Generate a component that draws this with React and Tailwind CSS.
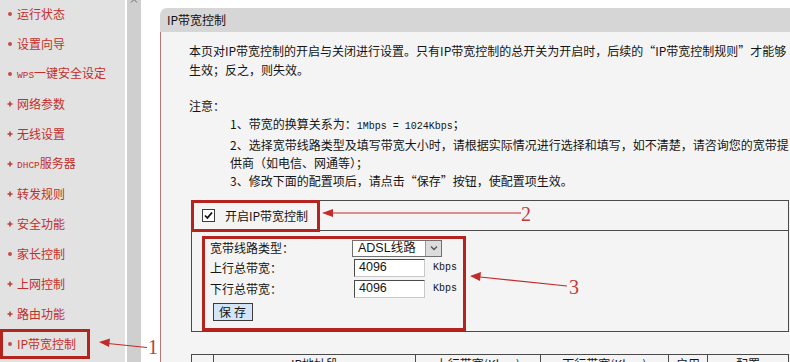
import React from 'react'

const menu = [
  ['运行状态', 'dot'],
  ['设置向导', 'dot'],
  ['WPS|一键安全设定', 'dot'],
  ['网络参数', 'plus'],
  ['无线设置', 'plus'],
  ['DHCP|服务器', 'plus'],
  ['转发规则', 'plus'],
  ['安全功能', 'plus'],
  ['家长控制', 'dot'],
  ['上网控制', 'plus'],
  ['路由功能', 'plus'],
  ['IP带宽控制', 'dot'],
]

function Bullet({ kind }) {
  if (kind === 'plus') {
    return (
      <svg width="6" height="6" viewBox="0 0 6 6" className="ml-[1px]">
        <path d="M3 0.5V5.5M0.5 3H5.5" stroke="#b8403c" strokeWidth="1.6" />
      </svg>
    )
  }
  return <span className="ml-[2px] w-[4px] h-[4px] rounded-full bg-[#c0504c]" />
}

function MenuLabel({ text }) {
  if (text.includes('|')) {
    const [latin, rest] = text.split('|')
    return (
      <span>
        <span className="font-['Liberation_Mono',monospace] text-[9.5px]">{latin}</span>
        {rest}
      </span>
    )
  }
  return <span>{text}</span>
}

function Sidebar() {
  return (
    <div className="w-[125px] shrink-0 bg-[#e2e2e2]">
      <div className="mt-[-1px]">
        {menu.map(([label, kind], i) => {
          const active = i === menu.length - 1
          return (
            <div
              key={label}
              className={
                active
                  ? 'h-[30px] w-[90px] flex items-center pl-[3px] border-[3px] border-[#b3241f] text-[#c22f2b]'
                  : 'h-[30px] flex items-center pl-[6px] text-[#c22f2b]'
              }
            >
              <div className="w-[11px] flex items-center">
                <Bullet kind={kind} />
              </div>
              <MenuLabel text={label} />
            </div>
          )
        })}
      </div>
    </div>
  )
}

function Checkbox() {
  return (
    <div className="w-[13px] h-[13px] border border-[#3c3c3c] bg-white flex items-center justify-center">
      <svg width="9" height="9" viewBox="0 0 9 9">
        <path d="M1 4.5L3.4 7L8 1.5" fill="none" stroke="#111" strokeWidth="1.8" />
      </svg>
    </div>
  )
}

function BandwidthForm() {
  return (
    <div className="w-[264px] h-[95px] border-[3px] border-[#b3241f] pl-[5px]">
      <div className="h-[18px] flex items-center">
        <span className="w-[142px]">宽带线路类型：</span>
        <div className="w-[90px] h-[17px] border border-[#707070] bg-white flex items-center">
          <span className="flex-1 pl-[5px] font-['Liberation_Sans','Noto_Sans_CJK_SC',sans-serif] text-[12.5px] leading-none">ADSL线路</span>
          <div className="w-[16px] h-full bg-[#dcdcdc] border-l border-[#9a9a9a] flex items-center justify-center">
            <svg width="8" height="6" viewBox="0 0 8 6">
              <path d="M1 1.5L4 4.5L7 1.5" fill="none" stroke="#555" strokeWidth="1.4" />
            </svg>
          </div>
        </div>
      </div>
      {['上行总带宽：', '下行总带宽：'].map((label) => (
        <div key={label} className="h-[21px] flex items-center">
          <span className="w-[144px]">{label}</span>
          <div className="w-[71px] h-[18px] border border-[#4a4a4a] border-b-[#c8c8c8] border-r-[#c8c8c8] bg-white flex items-center pl-[4px] font-['Liberation_Sans',sans-serif] text-[12.5px]">
            4096
          </div>
          <span className="ml-[8px] font-['Liberation_Mono',monospace] text-[10px]">Kbps</span>
        </div>
      ))}
      <button className="mt-[4px] ml-[3px] w-[40px] h-[18px] border border-[#3c3c3c] bg-[#d3e5f7] flex items-center justify-center text-[12px] tracking-[3px] pl-[2px]">
        保存
      </button>
    </div>
  )
}

function Panel() {
  return (
    <div className="flex-1 flex flex-col pt-[8px] min-w-0">
      <div className="h-[24px] shrink-0 bg-[#d6d6d6] rounded-tl-[7px] flex items-center pl-[7px] text-[#111]">
        IP带宽控制
      </div>
      <div className="flex-1 border-l border-[#b27878] bg-[#f4f4f4] text-[#151515]">
        <div className="pl-[28px] pt-[9px] leading-[19px] whitespace-nowrap">
          <div>本页对IP带宽控制的开启与关闭进行设置。只有IP带宽控制的总开关为开启时，后续的“IP带宽控制规则”才能够</div>
          <div>生效；反之，则失效。</div>
        </div>
        <div className="pl-[28px] mt-[18px] leading-[18px] whitespace-nowrap">
          <div>注意：</div>
          <div className="pl-[41px]">
            <div>
              1、带宽的换算关系为：
              <span className="font-['Liberation_Mono',monospace] text-[10px]">1Mbps = 1024Kbps</span>；
            </div>
            <div>2、选择宽带线路类型及填写带宽大小时，请根据实际情况进行选择和填写，如不清楚，请咨询您的宽带提</div>
            <div>供商（如电信、网通等）；</div>
            <div>3、修改下面的配置项后，请点击“保存”按钮，使配置项生效。</div>
          </div>
        </div>

        <div className="ml-[30px] mt-[10px] w-[598px] border border-[#4a4a4a]">
          <div className="relative h-[30px] flex items-center pl-[10px] border-b border-[#4a4a4a]">
            <Checkbox />
            <span className="ml-[10px]">开启IP带宽控制</span>
            <div className="absolute left-[-1px] top-[-1px] w-[129px] h-[32px] border-[3px] border-[#b3241f]" />
          </div>
          <div className="pl-[10px] pt-[5px]">
            <BandwidthForm />
          </div>
        </div>

        <div className="ml-[30px] mt-[22px] w-[598px] h-[40px] border border-[#4a4a4a] flex leading-none">
          <div className="w-[22px] border-r border-[#4a4a4a]" />
          <div className="w-[202px] pt-[3px] border-r border-[#4a4a4a] text-center">IP地址段</div>
          <div className="w-[125px] pt-[3px] border-r border-[#4a4a4a] text-center">上行带宽(Kbps)</div>
          <div className="w-[128px] pt-[3px] border-r border-[#4a4a4a] text-center">下行带宽(Kbps)</div>
          <div className="w-[39px] pt-[3px] border-r border-[#4a4a4a] text-center">启用</div>
          <div className="flex-1 pt-[3px] text-center">配置</div>
        </div>
      </div>
    </div>
  )
}

function Annotations() {
  const red = '#c42a2a'
  return (
    <svg className="absolute left-0 top-0 pointer-events-none" width="790" height="362" viewBox="0 0 790 362">
      <g stroke={red} strokeWidth="1.2" fill="none">
        <path d="M108 343.5L147 347.5" />
        <path d="M332 213H521" />
        <path d="M480 277L567 286" />
      </g>
      <g fill={red}>
        <polygon points="99,342 110,338.5 109,347" />
        <polygon points="322,213 333,209 333,217" />
        <polygon points="470,276 481,272 480,281" />
      </g>
      <g fill="#c23a3a" fontFamily="'Liberation Serif', serif" fontSize="20">
        <text x="148" y="354">1</text>
        <text x="521" y="221">2</text>
        <text x="569" y="294">3</text>
      </g>
    </svg>
  )
}

export default function App() {
  return (
    <div className="relative w-[790px] h-[362px] overflow-hidden bg-white flex text-[12px] font-['Noto_Sans_CJK_SC',sans-serif]">
      <Sidebar />
      <div className="w-[2px] shrink-0 bg-white" />
      <div className="w-[14px] shrink-0 bg-[#cfcfcf] flex justify-center">
        <svg width="8" height="4" viewBox="0 0 8 4" className="mt-[-1px]">
          <path d="M1 3.5L4 0.5L7 3.5" fill="none" stroke="#666" strokeWidth="1" />
        </svg>
      </div>
      <div className="w-[19px] shrink-0" />
      <Panel />
      <Annotations />
    </div>
  )
}
